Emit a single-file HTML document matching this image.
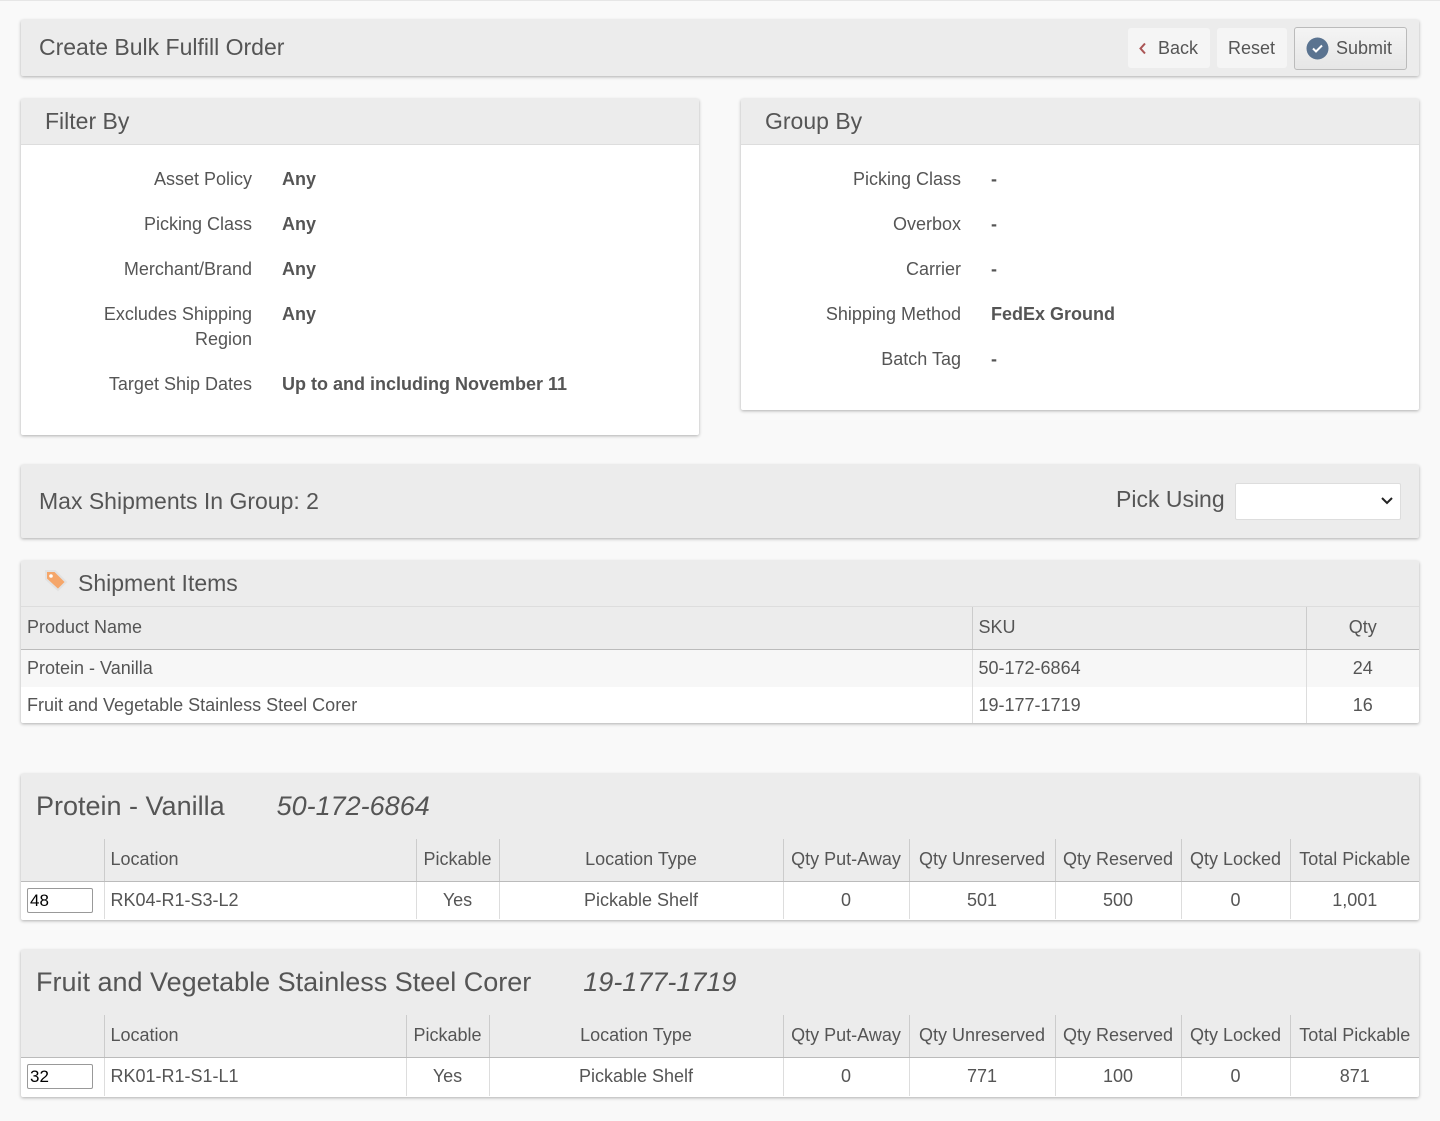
<!DOCTYPE html>
<html><head><meta charset="utf-8"><style>
*{box-sizing:border-box;margin:0;padding:0}
body{width:1440px;height:1121px;background:#f9f9f9;font-family:"Liberation Sans",sans-serif;color:#555;position:relative;overflow:hidden;border-top:1px solid #e6e6e6}
.p{position:absolute;background:#fff;box-shadow:0 1px 3px rgba(0,0,0,.3);border-radius:2px}
.hd{background:#ececec;border-bottom:1px solid #ddd}
.abs{position:absolute}
.btn{position:absolute;top:8px;height:40px;background:#f5f5f5;border-radius:3px;font-size:18px;line-height:40px;padding:0 11px;color:#555}
.lbl{position:absolute;font-size:18px;text-align:right;color:#555}
.val{position:absolute;font-size:18px;font-weight:bold;color:#555}
table{border-collapse:collapse;width:100%;font-size:18px;table-layout:fixed}
td,th{font-weight:normal;padding:0 6px;white-space:nowrap;overflow:hidden}
th{background:#ececec;border-bottom:1px solid #bbb;border-left:1px solid #ccc;height:42px}
td{border-left:1px solid #ddd}
th:first-child,td:first-child{border-left:none}
.c{text-align:center}
</style></head><body>

<div class="p hd" style="left:21px;top:19px;width:1398px;height:56px;border:none">
 <div class="abs" style="left:18px;top:14px;font-size:23px">Create Bulk Fulfill Order</div>
 <div class="btn" style="left:1107px;width:82px;padding-left:30px">Back<svg class="abs" style="left:10px;top:14px" width="10" height="13"><path d="M7 1.5L2.5 6.5 7 11.5" stroke="#a55" stroke-width="2" fill="none"/></svg></div>
 <div class="btn" style="left:1196px;width:70px">Reset</div>
 <div class="btn" style="left:1273px;width:113px;top:7px;height:43px;line-height:41px;border:1px solid #bbb;background:linear-gradient(#f4f4f4,#e6e6e6);padding-left:41px">Submit<svg class="abs" style="left:11px;top:9px" width="23" height="23"><circle cx="11.5" cy="11.5" r="11" fill="#5a7390"/><path d="M7 11.5l3 3 6-6" stroke="#fff" stroke-width="2" fill="none"/></svg></div>
</div>

<div class="p" style="left:21px;top:98px;width:678px;height:336px">
 <div class="hd" style="height:46px;font-size:23px;padding:9px 24px">Filter By</div>
 <div class="lbl" style="right:447px;top:70px">Asset Policy</div><div class="val" style="left:261px;top:70px">Any</div>
 <div class="lbl" style="right:447px;top:115px">Picking Class</div><div class="val" style="left:261px;top:115px">Any</div>
 <div class="lbl" style="right:447px;top:160px">Merchant/Brand</div><div class="val" style="left:261px;top:160px">Any</div>
 <div class="lbl" style="right:447px;top:205px;line-height:25px;margin-top:-2px">Excludes Shipping<br>Region</div><div class="val" style="left:261px;top:205px">Any</div>
 <div class="lbl" style="right:447px;top:275px">Target Ship Dates</div><div class="val" style="left:261px;top:275px">Up to and including November 11</div>
</div>

<div class="p" style="left:741px;top:98px;width:678px;height:311px">
 <div class="hd" style="height:46px;font-size:23px;padding:9px 24px">Group By</div>
 <div class="lbl" style="right:458px;top:70px">Picking Class</div><div class="val" style="left:250px;top:70px">-</div>
 <div class="lbl" style="right:458px;top:115px">Overbox</div><div class="val" style="left:250px;top:115px">-</div>
 <div class="lbl" style="right:458px;top:160px">Carrier</div><div class="val" style="left:250px;top:160px">-</div>
 <div class="lbl" style="right:458px;top:205px">Shipping Method</div><div class="val" style="left:250px;top:205px">FedEx Ground</div>
 <div class="lbl" style="right:458px;top:250px">Batch Tag</div><div class="val" style="left:250px;top:250px">-</div>
</div>

<div class="p hd" style="left:21px;top:464px;width:1398px;height:73px;border:none">
 <div class="abs" style="left:18px;top:23px;font-size:23px">Max Shipments In Group: 2</div>
 <div class="abs" style="left:1095px;top:21px;font-size:23px">Pick Using</div>
 <div class="abs" style="left:1214px;top:18px;width:166px;height:37px;background:#fff;border:1px solid #ddd;border-radius:2px"><svg class="abs" style="left:144px;top:12px" width="14" height="10"><path d="M2 2l5 5 5-5" stroke="#222" stroke-width="2" fill="none"/></svg></div>
</div>

<div class="p" style="left:21px;top:560px;width:1398px;height:162px">
 <div class="hd" style="height:46px;font-size:23px;padding:9px 0 0 57px;position:relative">
  <svg class="abs" style="left:22px;top:7px" width="26" height="24"><path d="M3 3h9l11 11-8 8L3 11z" fill="#f5a66a" stroke="#e2e2e2" stroke-width="2"/><circle cx="8" cy="8" r="1.8" fill="#fff"/></svg>Shipment Items</div>
 <table><colgroup><col style="width:951px"><col style="width:334px"><col></colgroup>
 <tr><th style="text-align:left">Product Name</th><th style="text-align:left">SKU</th><th class="c">Qty</th></tr>
 <tr style="background:#f7f7f7;height:38px"><td>Protein - Vanilla</td><td>50-172-6864</td><td class="c">24</td></tr>
 <tr style="height:36px"><td>Fruit and Vegetable Stainless Steel Corer</td><td>19-177-1719</td><td class="c">16</td></tr>
 </table>
</div>

<div class="p" style="left:21px;top:773px;width:1398px;height:146px">
 <div class="hd" style="height:65px;font-size:27px;padding:17px 0 0 15px;border-bottom:none">Protein - Vanilla<i style="margin-left:52px">50-172-6864</i></div>
 <table><colgroup><col style="width:83px"><col style="width:312px"><col style="width:83px"><col style="width:284px"><col style="width:126px"><col style="width:146px"><col style="width:126px"><col style="width:109px"><col></colgroup>
 <tr><th></th><th style="text-align:left">Location</th><th class="c">Pickable</th><th class="c">Location Type</th><th class="c">Qty Put-Away</th><th class="c">Qty Unreserved</th><th class="c">Qty Reserved</th><th class="c">Qty Locked</th><th class="c">Total Pickable</th></tr>
 <tr style="height:38px"><td style="padding-left:6px"><div style="width:66px;height:25px;border:1px solid #999;border-radius:2px;font-size:17px;padding-left:2px;line-height:23px;color:#000">48</div></td><td>RK04-R1-S3-L2</td><td class="c">Yes</td><td class="c">Pickable Shelf</td><td class="c">0</td><td class="c">501</td><td class="c">500</td><td class="c">0</td><td class="c">1,001</td></tr>
 </table>
</div>

<div class="p" style="left:21px;top:949px;width:1398px;height:147px">
 <div class="hd" style="height:65px;font-size:27px;padding:17px 0 0 15px;border-bottom:none">Fruit and Vegetable Stainless Steel Corer<i style="margin-left:52px">19-177-1719</i></div>
 <table><colgroup><col style="width:83px"><col style="width:302px"><col style="width:83px"><col style="width:294px"><col style="width:126px"><col style="width:146px"><col style="width:126px"><col style="width:109px"><col></colgroup>
 <tr><th></th><th style="text-align:left">Location</th><th class="c">Pickable</th><th class="c">Location Type</th><th class="c">Qty Put-Away</th><th class="c">Qty Unreserved</th><th class="c">Qty Reserved</th><th class="c">Qty Locked</th><th class="c">Total Pickable</th></tr>
 <tr style="height:39px"><td style="padding-left:6px"><div style="width:66px;height:25px;border:1px solid #999;border-radius:2px;font-size:17px;padding-left:2px;line-height:23px;color:#000">32</div></td><td>RK01-R1-S1-L1</td><td class="c">Yes</td><td class="c">Pickable Shelf</td><td class="c">0</td><td class="c">771</td><td class="c">100</td><td class="c">0</td><td class="c">871</td></tr>
 </table>
</div>
</body></html>
